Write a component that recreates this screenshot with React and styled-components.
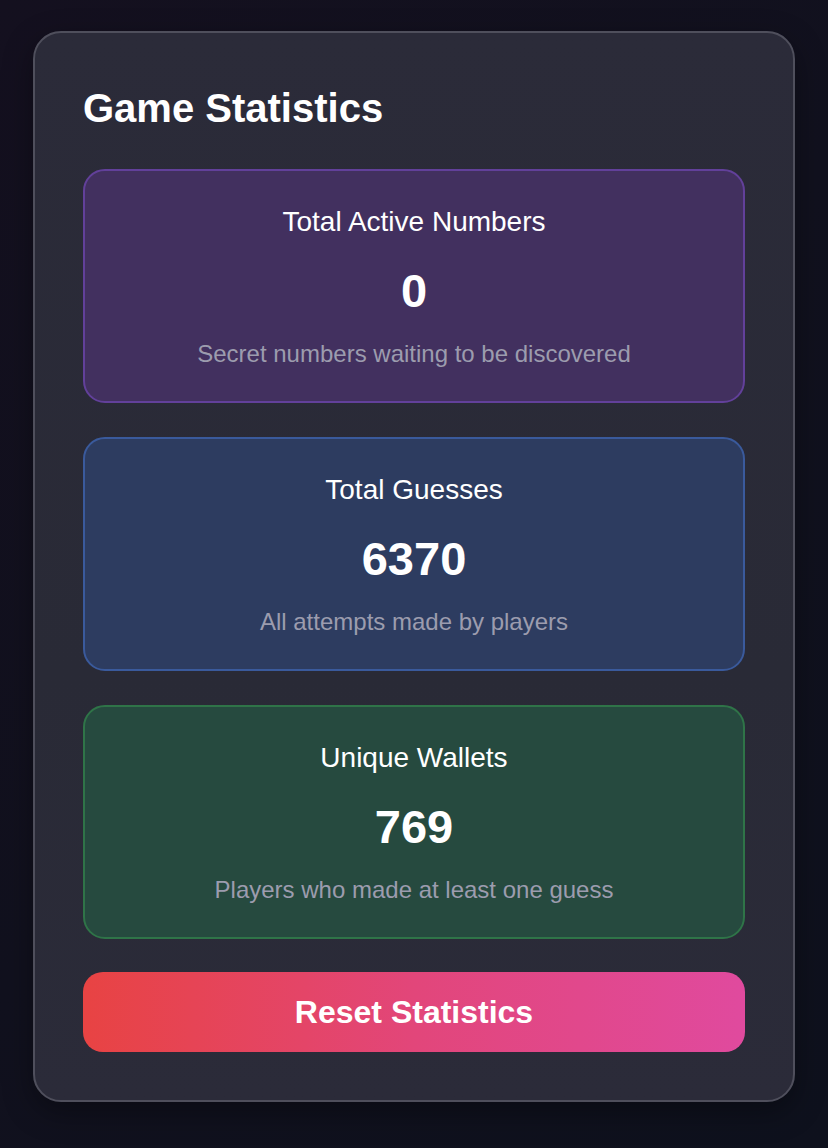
import React from 'react';
import styled, { createGlobalStyle } from 'styled-components';

const GlobalStyle = createGlobalStyle`
  html, body {
    margin: 0;
    padding: 0;
  }
  body {
    background: linear-gradient(135deg, #14101f 0%, #11111e 50%, #0e111d 100%);
    font-family: "Liberation Sans", Arial, Helvetica, sans-serif;
    min-height: 100vh;
  }
`;

const stats = [
  {
    label: 'Total Active Numbers',
    value: '0',
    note: 'Secret numbers waiting to be discovered',
    tone: 'purple',
  },
  {
    label: 'Total Guesses',
    value: '6370',
    note: 'All attempts made by players',
    tone: 'blue',
  },
  {
    label: 'Unique Wallets',
    value: '769',
    note: 'Players who made at least one guess',
    tone: 'green',
  },
];

const tones = {
  purple: { bg: '#42305f', border: '#62409a' },
  blue: { bg: '#2d3c60', border: '#3a5a9c' },
  green: { bg: '#264a3f', border: '#2f7448' },
};

export default function App() {
  return (
    <>
      <GlobalStyle />
      <Page>
        <Card>
          <Title>Game Statistics</Title>
          <StatList>
            {stats.map((s) => (
              <StatBox key={s.label} tone={s.tone}>
                <StatLabel>{s.label}</StatLabel>
                <StatValue>{s.value}</StatValue>
                <StatNote>{s.note}</StatNote>
              </StatBox>
            ))}
          </StatList>
          <ResetButton type="button">Reset Statistics</ResetButton>
        </Card>
      </Page>
    </>
  );
}

const Page = styled.div`
  padding: 31px 33px 47px;
`;

const Card = styled.div`
  background: linear-gradient(180deg, #2b2b39 0%, #292a36 60%, #2b2b39 100%);
  border: 2px solid #4f4f5c;
  border-radius: 28px;
  box-shadow: 0 10px 30px rgba(0, 0, 0, 0.35);
  padding: 48px;
  display: flex;
  flex-direction: column;
`;

const Title = styled.h2`
  color: #ffffff;
  font-size: 40px;
  font-weight: 700;
  line-height: 54px;
  margin: 0 0 34px;
`;

const StatList = styled.div`
  display: flex;
  flex-direction: column;
  gap: 34px;
  margin-bottom: 33px;
`;

const StatBox = styled.div`
  background: ${({ tone }) => tones[tone].bg};
  border: 2px solid ${({ tone }) => tones[tone].border};
  border-radius: 22px;
  padding: 36px 24px 34px;
  display: flex;
  flex-direction: column;
  align-items: center;
  text-align: center;
`;

const StatLabel = styled.div`
  color: #ffffff;
  font-size: 28px;
  line-height: 30px;
`;

const StatValue = styled.div`
  color: #ffffff;
  font-size: 47px;
  font-weight: 700;
  line-height: 56px;
  margin-top: 26px;
`;

const StatNote = styled.div`
  color: #9c9cae;
  font-size: 24px;
  line-height: 26px;
  margin-top: 22px;
`;

const ResetButton = styled.button`
  background: linear-gradient(90deg, #e84343 0%, #e2467a 50%, #e04a9e 100%);
  border: none;
  border-radius: 20px;
  color: #ffffff;
  cursor: pointer;
  font-family: "Liberation Sans", Arial, Helvetica, sans-serif;
  font-size: 32px;
  font-weight: 700;
  height: 80px;
  width: 100%;
`;
